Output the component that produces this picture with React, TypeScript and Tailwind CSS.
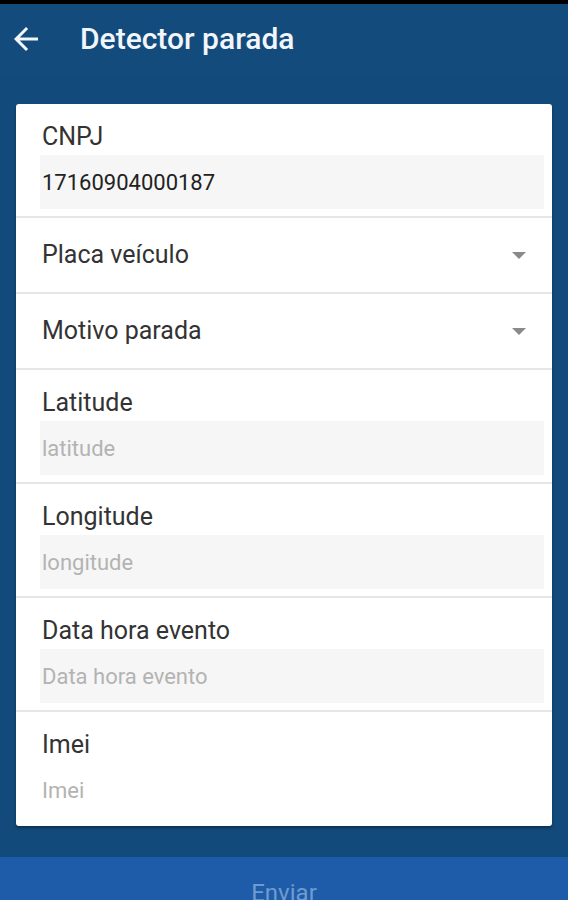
import React from "react";

function TextField({ label, value, placeholder, last }: { label: string; value?: string; placeholder?: string; last?: boolean }) {
  return (
    <div className={`pt-[19px] ${last ? "pb-[9px]" : "pb-[7px] border-b-2 border-[#e6e6e6]"}`}>
      <div className="pl-[26px] text-[25px] leading-[28px] text-[#333333]">{label}</div>
      <div className={`ml-[24px] mr-[8px] mt-[4px] h-[54px] pl-[2px] flex items-center text-[22px] ${last ? "bg-white" : "bg-[#f6f6f6]"}`}>
        {value ? (
          <span className="text-[#222222]">{value}</span>
        ) : (
          <span className="text-[#b3b3b3]">{placeholder}</span>
        )}
      </div>
    </div>
  );
}

function SelectField({ label }: { label: string }) {
  return (
    <div className="h-[76px] flex items-center justify-between pl-[26px] pr-[26px] border-b-2 border-[#e6e6e6]">
      <span className="text-[25px] leading-[28px] text-[#333333]">{label}</span>
      <svg width="14" height="8" viewBox="0 0 14 8" className="mt-[1px]">
        <polygon points="0,0 14,0 7,7" fill="#8a8a8a" />
      </svg>
    </div>
  );
}

export default function App() {
  return (
    <div className="w-full h-[900px] overflow-hidden bg-[#124a7b]" style={{ fontFamily: "Roboto, 'Noto Sans', sans-serif" }}>
      <div className="h-[4px] bg-black" />
      <div className="h-[70px] flex items-center bg-[#134b7d]">
        <svg width="36" height="36" viewBox="0 0 24 24" className="ml-[8px]">
          <path d="M20 11H7.83l5.59-5.59L12 4l-8 8 8 8 1.41-1.41L7.83 13H20v-2z" fill="#f2f6fa" />
        </svg>
        <span className="ml-[36px] text-[30px] font-medium text-[#f2f6fa] leading-none">Detector parada</span>
      </div>
      <div className="px-4 pt-[30px]">
        <div className="bg-white rounded-[3px] shadow-[0_2px_3px_rgba(0,0,0,0.35)]">
          <TextField label="CNPJ" value="17160904000187" />
          <SelectField label="Placa veículo" />
          <SelectField label="Motivo parada" />
          <TextField label="Latitude" placeholder="latitude" />
          <TextField label="Longitude" placeholder="longitude" />
          <TextField label="Data hora evento" placeholder="Data hora evento" />
          <TextField label="Imei" placeholder="Imei" last />
        </div>
      </div>
      <div className="mt-[31px] h-[72px] bg-[#1e5ba8] flex items-center justify-center">
        <span className="text-[24px] text-[#6f9bd0]">Enviar</span>
      </div>
    </div>
  );
}
